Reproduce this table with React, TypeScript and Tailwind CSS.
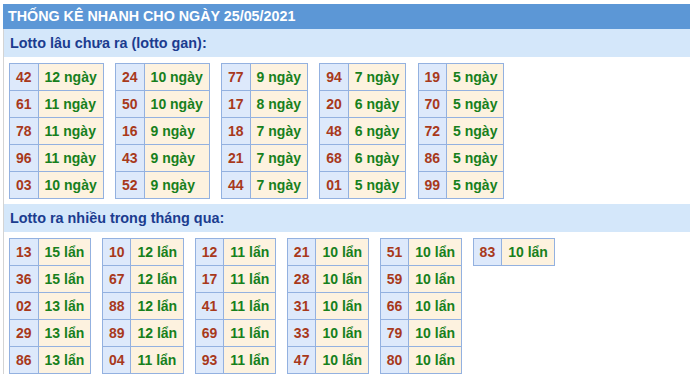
const ganCols: [string, string][][] = [
  [["42", "12 ngày"], ["61", "11 ngày"], ["78", "11 ngày"], ["96", "11 ngày"], ["03", "10 ngày"]],
  [["24", "10 ngày"], ["50", "10 ngày"], ["16", "9 ngày"], ["43", "9 ngày"], ["52", "9 ngày"]],
  [["77", "9 ngày"], ["17", "8 ngày"], ["18", "7 ngày"], ["21", "7 ngày"], ["44", "7 ngày"]],
  [["94", "7 ngày"], ["20", "6 ngày"], ["48", "6 ngày"], ["68", "6 ngày"], ["01", "5 ngày"]],
  [["19", "5 ngày"], ["70", "5 ngày"], ["72", "5 ngày"], ["86", "5 ngày"], ["99", "5 ngày"]],
];

const nhieuCols: [string, string][][] = [
  [["13", "15 lẩn"], ["36", "15 lẩn"], ["02", "13 lẩn"], ["29", "13 lẩn"], ["86", "13 lẩn"]],
  [["10", "12 lẩn"], ["67", "12 lẩn"], ["88", "12 lẩn"], ["89", "12 lẩn"], ["04", "11 lẩn"]],
  [["12", "11 lẩn"], ["17", "11 lẩn"], ["41", "11 lẩn"], ["69", "11 lẩn"], ["93", "11 lẩn"]],
  [["21", "10 lẩn"], ["28", "10 lẩn"], ["31", "10 lẩn"], ["33", "10 lẩn"], ["47", "10 lẩn"]],
  [["51", "10 lẩn"], ["59", "10 lẩn"], ["66", "10 lẩn"], ["79", "10 lẩn"], ["80", "10 lẩn"]],
  [["83", "10 lẩn"]],
];

const LottoTable = ({ rows }: { rows: [string, string][] }) => {
  return (
    <table className="border-collapse text-[14px] leading-4 font-bold">
      <tbody>
        {rows.map(([num, label]) => (
          <tr key={num}>
            <td className="border border-[#93b1e0] bg-[#dde9fb] px-[6px] py-[5px] text-[#a8391b]">
              {num}
            </td>
            <td className="border border-[#93b1e0] bg-[#fdf2df] px-[6px] py-[5px] text-[#17801c]">
              {label}
            </td>
          </tr>
        ))}
      </tbody>
    </table>
  );
};

const SectionTitle = ({ children }: { children: string }) => (
  <div className="h-[28px] bg-[#d4e7fa] pl-[6px] text-[14.4px] leading-[28px] font-bold text-[#1b3c8f]">
    {children}
  </div>
);

export default function App() {
  return (
    <main className="w-[690px] h-[374px] overflow-hidden bg-white pt-[4px] pl-[3px] font-['Liberation_Sans',Arial,sans-serif]">
      <div className="h-[25px] bg-[#5c97d6] pl-[5px] text-[14.3px] leading-[25px] font-bold text-white">
        THỐNG KÊ NHANH CHO NGÀY 25/05/2021
      </div>
      <div className="border-l border-[#d4d4d4]">
        <SectionTitle>Lotto lâu chưa ra (lotto gan):</SectionTitle>
        <div className="flex items-start gap-[11.3px] pl-[5px] pt-[6px]">
          {ganCols.map((rows, i) => (
            <LottoTable key={i} rows={rows} />
          ))}
        </div>
        <div className="mt-[5px]">
          <SectionTitle>Lotto ra nhiều trong tháng qua:</SectionTitle>
        </div>
        <div className="flex items-start gap-[10.6px] pl-[5px] pt-[6px]">
          {nhieuCols.map((rows, i) => (
            <LottoTable key={i} rows={rows} />
          ))}
        </div>
      </div>
    </main>
  );
}
